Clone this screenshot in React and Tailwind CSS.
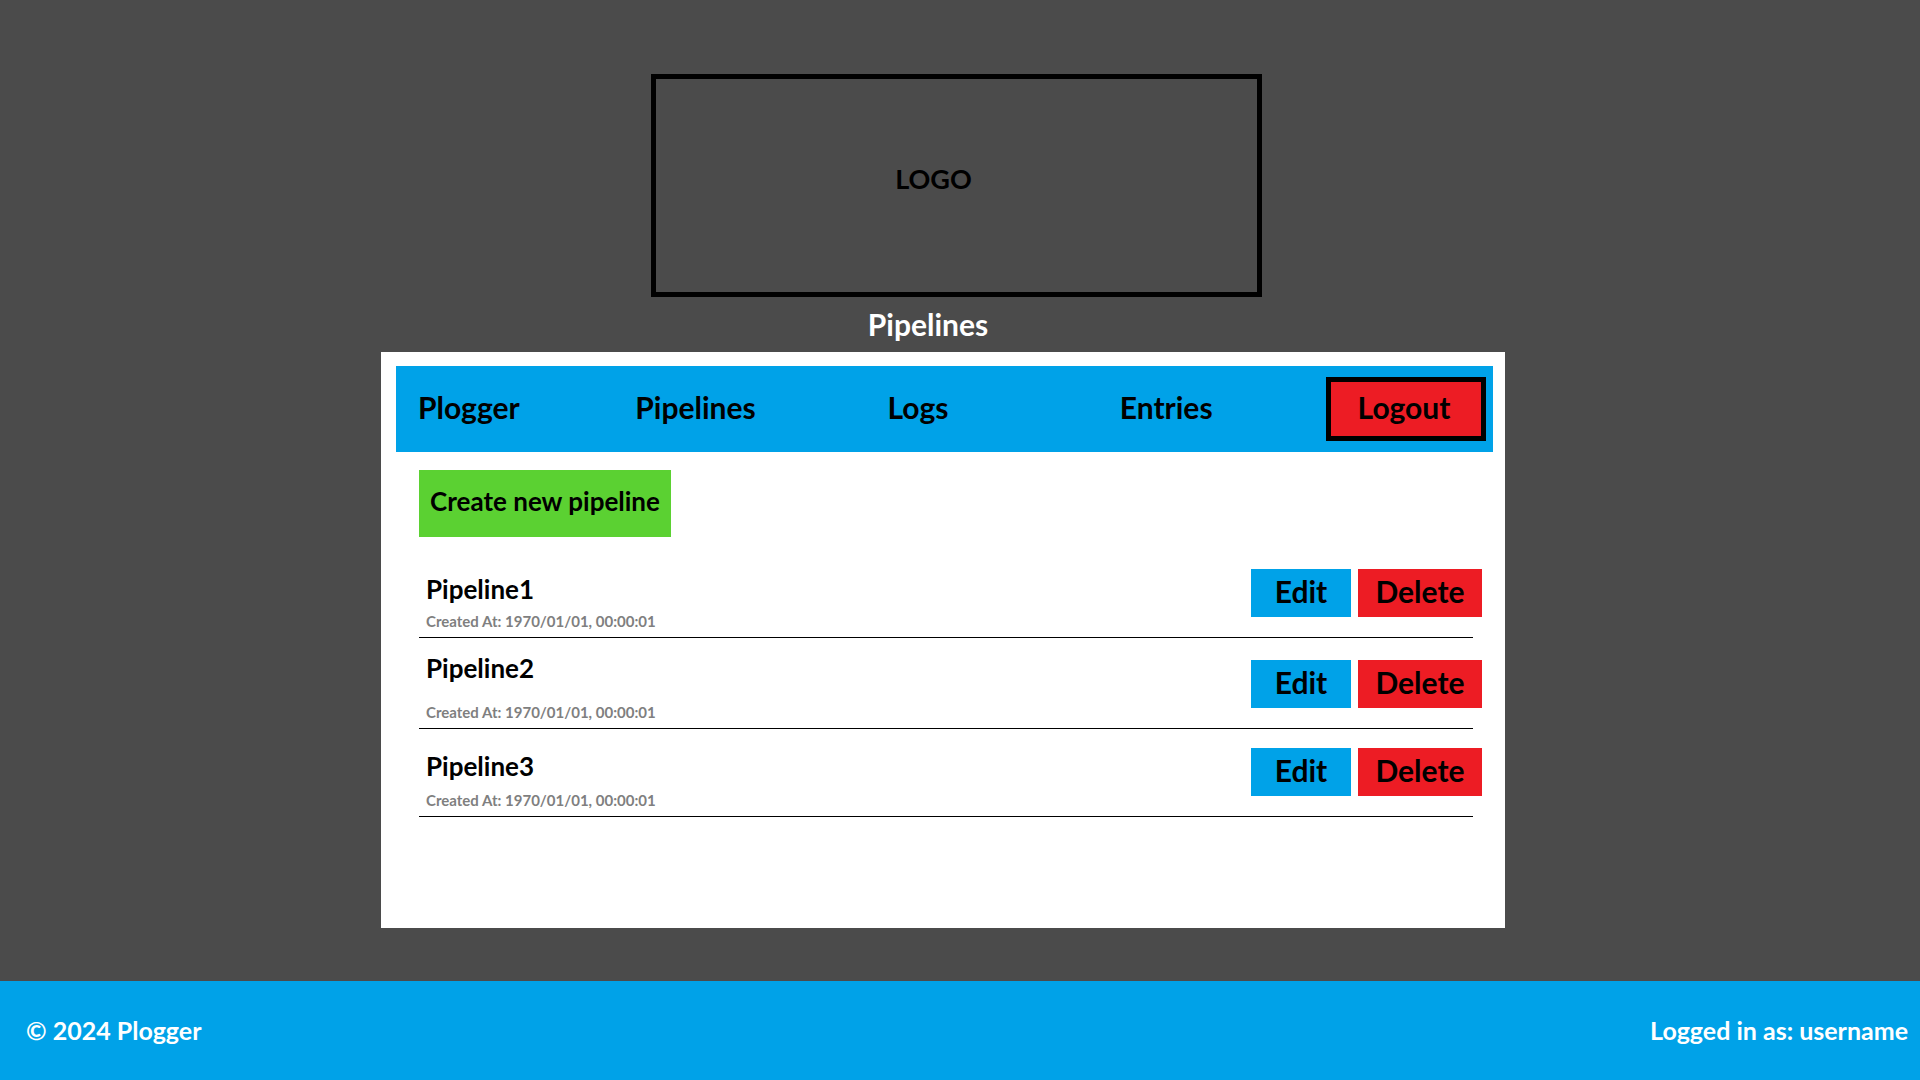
const navLinks = ["Plogger", "Pipelines", "Logs", "Entries"];

const pipelines = [
  { name: "Pipeline1", createdAt: "1970/01/01, 00:00:01", row: "pt-8", text: "gap-2" },
  { name: "Pipeline2", createdAt: "1970/01/01, 00:00:01", row: "pt-[22px]", text: "gap-5" },
  { name: "Pipeline3", createdAt: "1970/01/01, 00:00:01", row: "pt-[19px]", text: "gap-2.5" },
];

function PipelineRow({ pipeline }) {
  return (
    <li className={`flex items-start justify-between border-b border-black pl-[7px] ${pipeline.row}`}>
      <div className={`flex h-[68px] flex-col justify-end pb-1.5 ${pipeline.text}`}>
        <h2 className="text-[26px] leading-[28px]">{pipeline.name}</h2>
        <p className="text-[15px] leading-[20px] text-[#7f7f7f]">Created At: {pipeline.createdAt}</p>
      </div>
      <div className="-mr-[9px] flex gap-[7px]">
        <button className="h-12 w-[100px] bg-[#00a2e8] pb-1 text-[30px] leading-[32px]">Edit</button>
        <button className="h-12 w-[124px] bg-[#ed1c24] pb-1 text-[30px] leading-[32px]">Delete</button>
      </div>
    </li>
  );
}

export default function App() {
  return (
    <div className="flex min-h-screen flex-col bg-[#4b4b4b] font-['Lato',sans-serif] font-bold text-black">
      <main className="flex flex-1 flex-col items-center pt-[74px] pr-[34px] pb-[53px]">
        <div className="w-full max-w-[1124px]">
          <div className="flex flex-col items-center">
            <div className="ml-[27px] flex h-[223px] w-full max-w-[611px] items-center justify-center border-5 border-black pr-[46px] pb-3 text-[27px]">
              LOGO
            </div>
          </div>
          <h1 className="pr-[30px] text-center text-[30px] leading-[55px] text-white">Pipelines</h1>
          <div className="min-h-[576px] bg-white pt-[14px] pr-3 pl-[15px]">
            <nav className="grid h-[86px] grid-cols-[217fr_252fr_232fr_206fr_160px] items-center bg-[#00a2e8] pr-[7px] pl-[22px] text-[30px] leading-[32px]">
              {navLinks.map((label) => (
                <a key={label} href="#" className="justify-self-start pb-1">
                  {label}
                </a>
              ))}
              <button className="h-16 border-5 border-black bg-[#ed1c24] pr-1 pb-1">Logout</button>
            </nav>
            <div className="pt-[18px] pr-5 pl-[23px]">
              <button className="h-[67px] w-[252px] bg-[#5bd132] pb-1 text-[26px]">Create new pipeline</button>
              <ul>
                {pipelines.map((pipeline) => (
                  <PipelineRow key={pipeline.name} pipeline={pipeline} />
                ))}
              </ul>
            </div>
          </div>
        </div>
      </main>
      <footer className="flex h-[99px] items-center justify-between bg-[#00a2e8] pr-3 pl-[26px] text-[25px] text-white">
        <p>© 2024 Plogger</p>
        <p>Logged in as: username</p>
      </footer>
    </div>
  );
}
